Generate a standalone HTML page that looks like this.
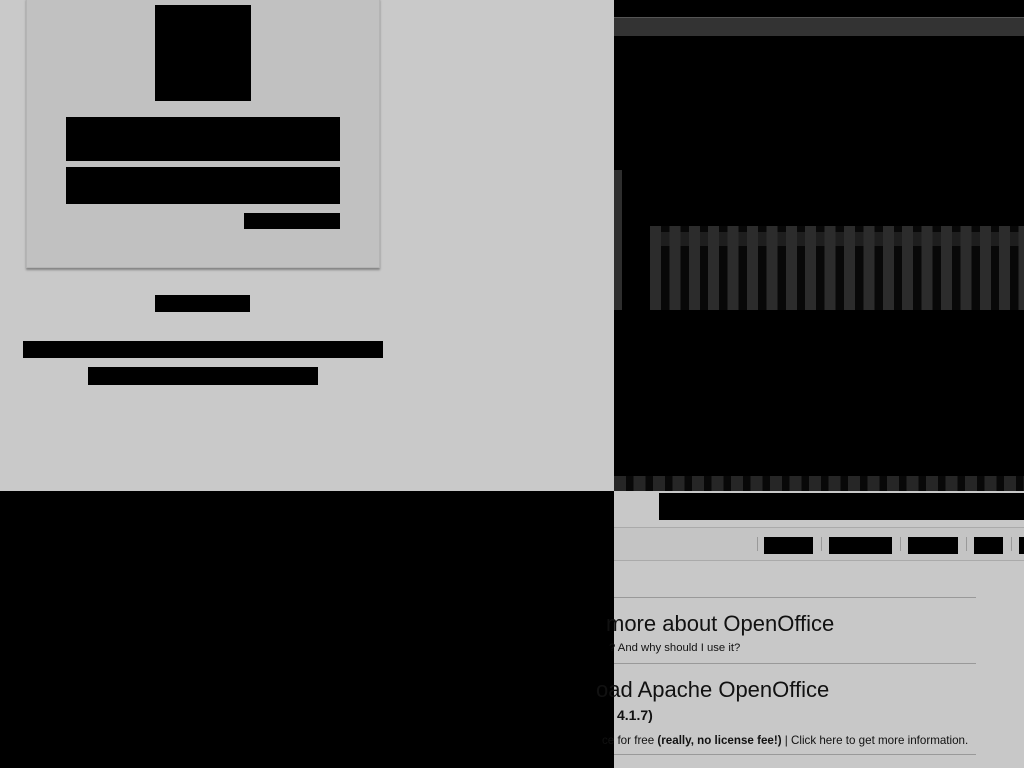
<!DOCTYPE html>
<html><head><meta charset="utf-8"><style>
*{margin:0;padding:0;box-sizing:border-box}
body{width:1024px;height:768px;overflow:hidden;background:#000;position:relative;font-family:"Liberation Sans",sans-serif}
.a{position:absolute}
.k{position:absolute;background:#000}
</style></head><body>
<div class="a" style="left:614px;top:17px;width:410px;height:19px;background:#333;border-top:1px solid #555"></div>
<div class="a" style="left:614px;top:170px;width:8px;height:140px;background:#2e2e2e"></div>
<div class="a" style="left:650px;top:226px;width:374px;height:84px;background:repeating-linear-gradient(90deg,#2c2c2c 0 11px,#080808 11px 19.4px)"></div>
<div class="a" style="left:650px;top:232px;width:374px;height:14px;background:rgba(45,45,45,.6)"></div>
<div class="a" style="left:614px;top:476px;width:410px;height:15px;background:repeating-linear-gradient(90deg,#262626 0 12px,#080808 12px 19.5px)"></div>
<div class="a" style="left:614px;top:491px;width:410px;height:277px;background:#c8c8c8;font-family:'Liberation Sans',sans-serif;color:#111">
  <div class="k" style="left:45px;top:2px;width:365px;height:27px"></div>
  <div class="a" style="left:0;top:36px;width:410px;height:34px;background:#c4c4c4;border-top:1px solid #aaa;border-bottom:1px solid #aaa"></div>
  <div class="a" style="left:143px;top:46px;width:1px;height:14px;background:#999"></div>
  <div class="k" style="left:150px;top:46px;width:49px;height:17px"></div>
  <div class="a" style="left:207px;top:46px;width:1px;height:14px;background:#999"></div>
  <div class="k" style="left:215px;top:46px;width:63px;height:17px"></div>
  <div class="a" style="left:286px;top:46px;width:1px;height:14px;background:#999"></div>
  <div class="k" style="left:294px;top:46px;width:50px;height:17px"></div>
  <div class="a" style="left:352px;top:46px;width:1px;height:14px;background:#999"></div>
  <div class="k" style="left:360px;top:46px;width:29px;height:17px"></div>
  <div class="a" style="left:397px;top:46px;width:1px;height:14px;background:#999"></div>
  <div class="k" style="left:405px;top:46px;width:5px;height:17px"></div>
  <div class="a" style="left:0;top:106px;width:362px;height:1px;background:#999"></div>
  <div class="a" style="left:-8px;top:120px;font-size:22px;white-space:nowrap">more about OpenOffice</div>
  <div class="a" style="left:-5px;top:151px;font-size:11.3px;white-space:nowrap">? And why should I use it?</div>
  <div class="a" style="left:0;top:172px;width:362px;height:1px;background:#999"></div>
  <div class="a" style="left:-18px;top:186px;font-size:22px;white-space:nowrap">oad Apache OpenOffice</div>
  <div class="a" style="left:3px;top:216px;font-size:14px;font-weight:bold;white-space:nowrap">4.1.7)</div>
  <div class="a" style="left:-12px;top:243px;font-size:11.6px;white-space:nowrap">ce for free <b>(really, no license fee!)</b> | Click here to get more information.</div>
  <div class="a" style="left:0;top:263px;width:362px;height:1px;background:#999"></div>
</div>
<div class="a" style="left:0;top:0;width:614px;height:491px;background:#c9c9c9">
  <div class="a" style="left:26px;top:-2px;width:354px;height:270px;background:#c1c1c1;border:1px solid #b4b4b4;box-shadow:0 2px 2px rgba(0,0,0,.35)"></div>
  <div class="k" style="left:155px;top:5px;width:96px;height:96px"></div>
  <div class="k" style="left:66px;top:117px;width:274px;height:44px"></div>
  <div class="k" style="left:66px;top:167px;width:274px;height:37px"></div>
  <div class="k" style="left:244px;top:213px;width:96px;height:16px"></div>
  <div class="k" style="left:155px;top:295px;width:95px;height:17px"></div>
  <div class="k" style="left:23px;top:341px;width:360px;height:17px"></div>
  <div class="k" style="left:88px;top:367px;width:230px;height:18px"></div>
</div>
</body></html>
